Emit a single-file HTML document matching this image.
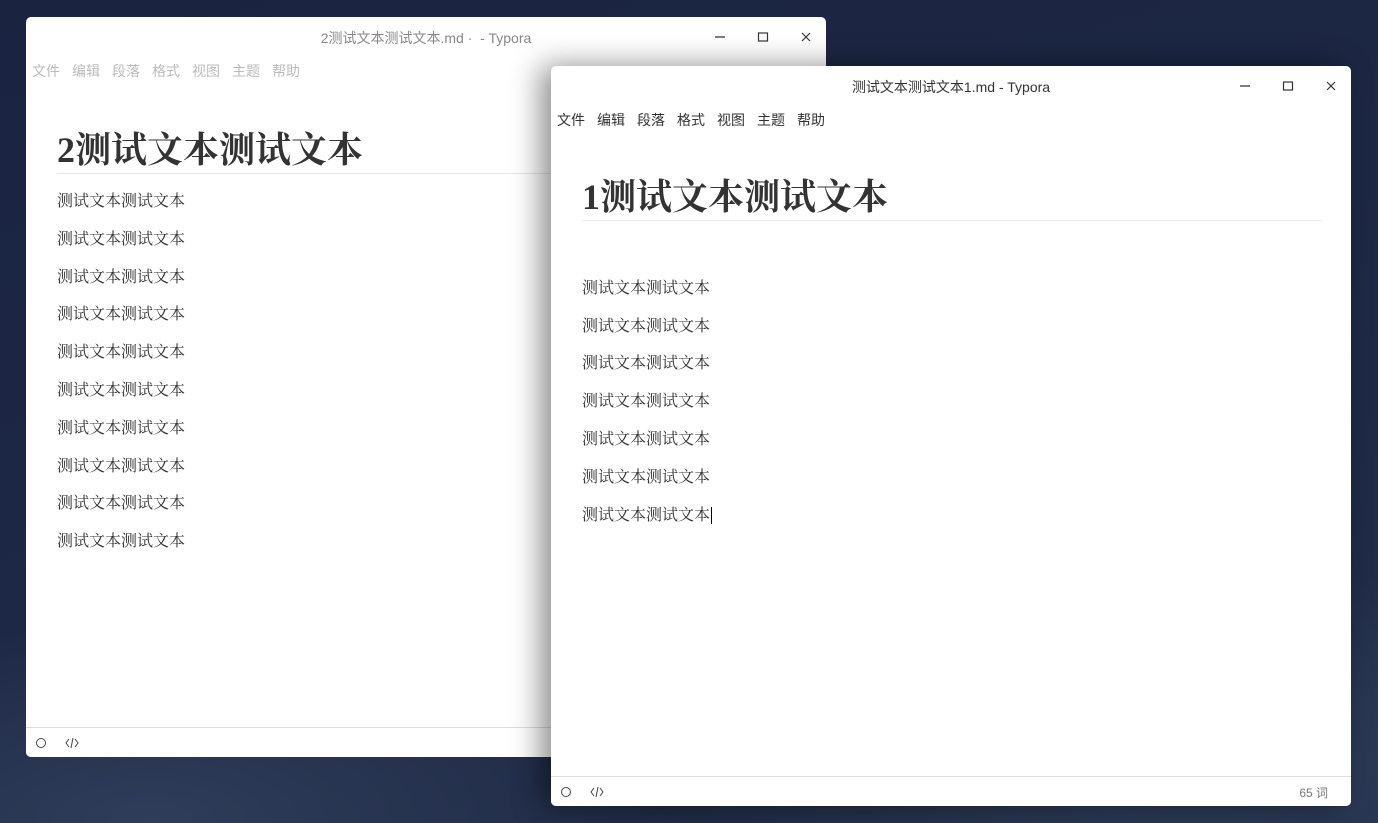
<!DOCTYPE html>
<html><head><meta charset="utf-8"><style>
*{margin:0;padding:0;box-sizing:border-box}
body{width:1378px;height:823px;overflow:hidden;position:relative;
background:radial-gradient(ellipse 500px 200px at 150px 820px,#2f3d5a,transparent),radial-gradient(ellipse 500px 200px at 1200px 760px,#2f3e5b,transparent),linear-gradient(160deg,#1a2440 0%,#1d2844 50%,#222e4a 100%);
font-family:"Liberation Sans","Noto Sans CJK SC",sans-serif}
.win{position:absolute;width:800px;height:740px;background:#fff;border-radius:5px;overflow:hidden}
.title{position:absolute;top:0;left:0;right:0;height:40px;text-align:center;line-height:42px;font-size:14px}
.menu{position:absolute;top:44px;left:6px;font-size:14px}
.menu span{margin-right:12px}
.ctl{position:absolute;top:12px;width:16px;height:16px}
h1{position:absolute;left:31px;width:740px;font-family:"Liberation Serif","Noto Serif CJK SC",serif;font-weight:bold;font-size:36px;color:#333;border-bottom:1px solid #e8e8e8;padding-bottom:0px;line-height:46px}
.p{position:absolute;left:31px;font-family:"Liberation Serif","Noto Serif CJK SC",serif;font-size:16px;color:#333;line-height:20px}
.foot{position:absolute;bottom:0;left:0;right:0;height:30px;border-top:1px solid #ddd;background:#fff}
</style></head><body>
<div class="win" style="left:26px;top:17px">
<div class="title" style="color:#888">2测试文本测试文本.md · &nbsp;- Typora</div>
<svg class="ctl" style="left:686px" viewBox="0 0 16 16"><path d="M3 8H13" stroke="#333" stroke-width="1.2"/></svg>
<svg class="ctl" style="left:729px" viewBox="0 0 16 16"><rect x="3.5" y="4" width="9" height="8" fill="none" stroke="#333" stroke-width="1.2"/></svg>
<svg class="ctl" style="left:772px" viewBox="0 0 16 16"><path d="M4 4L12 12M12 4L4 12" stroke="#333" stroke-width="1.2"/></svg>
<div class="menu" style="color:#bbb"><span>文件</span><span>编辑</span><span>段落</span><span>格式</span><span>视图</span><span>主题</span><span>帮助</span></div>
<h1 style="top:110px">2测试文本测试文本</h1>
<div class="p" style="top:175px">测试文本测试文本</div>
<div class="p" style="top:213px">测试文本测试文本</div>
<div class="p" style="top:251px">测试文本测试文本</div>
<div class="p" style="top:288px">测试文本测试文本</div>
<div class="p" style="top:326px">测试文本测试文本</div>
<div class="p" style="top:364px">测试文本测试文本</div>
<div class="p" style="top:402px">测试文本测试文本</div>
<div class="p" style="top:440px">测试文本测试文本</div>
<div class="p" style="top:477px">测试文本测试文本</div>
<div class="p" style="top:515px">测试文本测试文本</div>
<div class="foot"><svg style="position:absolute;left:9px;top:9px" width="12" height="12"><circle cx="6" cy="6" r="4.5" fill="none" stroke="#444"/></svg><svg style="position:absolute;left:38px;top:8px" width="16" height="14"><path d="M5 3L2 7L5 11M11 3L14 7L11 11M9 2L7 12" fill="none" stroke="#444"/></svg></div>
</div>
<div class="win" style="left:551px;top:66px;box-shadow:-10px 0 30px rgba(0,0,0,.45)">
<div class="title" style="color:#333">测试文本测试文本1.md - Typora</div>
<svg class="ctl" style="left:686px" viewBox="0 0 16 16"><path d="M3 8H13" stroke="#333" stroke-width="1.2"/></svg>
<svg class="ctl" style="left:729px" viewBox="0 0 16 16"><rect x="3.5" y="4" width="9" height="8" fill="none" stroke="#333" stroke-width="1.2"/></svg>
<svg class="ctl" style="left:772px" viewBox="0 0 16 16"><path d="M4 4L12 12M12 4L4 12" stroke="#333" stroke-width="1.2"/></svg>
<div class="menu" style="color:#333"><span>文件</span><span>编辑</span><span>段落</span><span>格式</span><span>视图</span><span>主题</span><span>帮助</span></div>
<h1 style="top:108px">1测试文本测试文本</h1>
<div class="p" style="top:213px">测试文本测试文本</div>
<div class="p" style="top:251px">测试文本测试文本</div>
<div class="p" style="top:288px">测试文本测试文本</div>
<div class="p" style="top:326px">测试文本测试文本</div>
<div class="p" style="top:364px">测试文本测试文本</div>
<div class="p" style="top:402px">测试文本测试文本</div>
<div class="p" style="top:440px">测试文本测试文本<span style="border-left:1px solid #000;margin-left:1px"></span></div>
<div class="foot"><svg style="position:absolute;left:9px;top:9px" width="12" height="12"><circle cx="6" cy="6" r="4.5" fill="none" stroke="#444"/></svg><svg style="position:absolute;left:38px;top:8px" width="16" height="14"><path d="M5 3L2 7L5 11M11 3L14 7L11 11M9 2L7 12" fill="none" stroke="#444"/></svg><div style="position:absolute;right:23px;top:7px;font-size:12px;color:#777">65 词</div></div>
</div>
</body></html>
